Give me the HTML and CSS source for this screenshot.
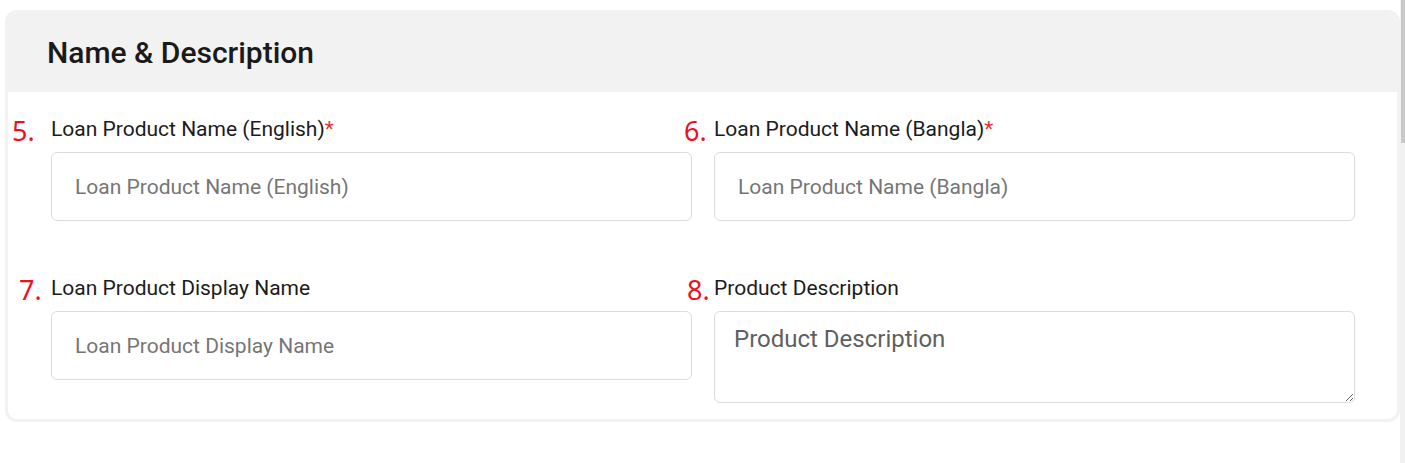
FILE: index.html
```html
<!DOCTYPE html>
<html lang="en">
<head>
	<meta charset="UTF-8">
	<meta name="viewport" content="width=device-width, initial-scale=1.0">
	<title>Loan Product</title>
	<link rel="stylesheet" href="styles.css">
</head>
<body>
	<section class="card">
		<div class="card_head">
			<h2>Name &amp; Description</h2>
		</div>
		<div class="card_body">
			<div class="field">
				<span class="mark m5">5.</span>
				<label>Loan Product Name (English)<i>*</i></label>
				<input type="text" placeholder="Loan Product Name (English)">
			</div>
			<div class="field">
				<span class="mark m6">6.</span>
				<label>Loan Product Name (Bangla)<i>*</i></label>
				<input type="text" placeholder="Loan Product Name (Bangla)">
			</div>
			<div class="field">
				<span class="mark m7">7.</span>
				<label>Loan Product Display Name</label>
				<input type="text" placeholder="Loan Product Display Name">
			</div>
			<div class="field">
				<span class="mark m8">8.</span>
				<label>Product Description</label>
				<textarea placeholder="Product Description"></textarea>
			</div>
		</div>
	</section>
	<div class="scroll"><span></span></div>
</body>
</html>
```
FILE: styles.css
```css
*{margin:0; padding:0; box-sizing:border-box;}
body{
	padding:10px 5px 0 5px;
	background:#fff;
	font-family:Roboto, "Liberation Sans", sans-serif;
	color:#1c1c1c;
}
.card{
	width:1395px;
	border:3px solid #f2f2f2;
	border-radius:12px;
	overflow:hidden;
	background:#fff;
}
.card_head{
	display:flex;
	align-items:center;
	height:79px;
	padding-left:39px;
	background:#f2f2f2;
}
.card_head h2{
	font-size:30px;
	font-weight:500;
	color:#1a1a1a;
}
.card_body{
	display:grid;
	grid-template-columns:641px 641px;
	column-gap:22px;
	row-gap:55px;
	padding:25px 0 16px 43px;
}
.field{
	position:relative;
	display:flex;
	flex-direction:column;
}
.field label{
	font-size:21px;
	line-height:24px;
	margin-bottom:11px;
	color:#1c1c1c;
}
.field label i{
	font-style:normal;
	color:#e8303c;
}
.field input,
.field textarea{
	width:100%;
	border:1px solid #dcdcdc;
	border-radius:6px;
	font-family:Roboto, "Liberation Sans", sans-serif;
	outline:none;
}
.field input{
	height:69px;
	padding:1px 23px 0;
	font-size:21px;
}
.field input::placeholder{color:#767676;}
.field textarea{
	height:92px;
	padding:13px 19px;
	font-size:24px;
	resize:vertical;
}
.field textarea::placeholder{color:#5f5f5f;}
.mark{
	position:absolute;
	top:-2px;
	font-family:"Noto Sans", "Open Sans", sans-serif;
	font-size:27px;
	line-height:32px;
	color:#f0101c;
}
.m5{left:-39px;}
.m6{left:-30px;}
.m7{left:-32px;}
.m8{left:-27px;}
.scroll{
	position:fixed;
	top:0;
	right:0;
	width:5px;
	height:100vh;
	background:#f1f1f1;
}
.scroll span{
	display:block;
	width:4px;
	margin-left:1px;
	height:143px;
	background:#c9c9c9;
}
```
